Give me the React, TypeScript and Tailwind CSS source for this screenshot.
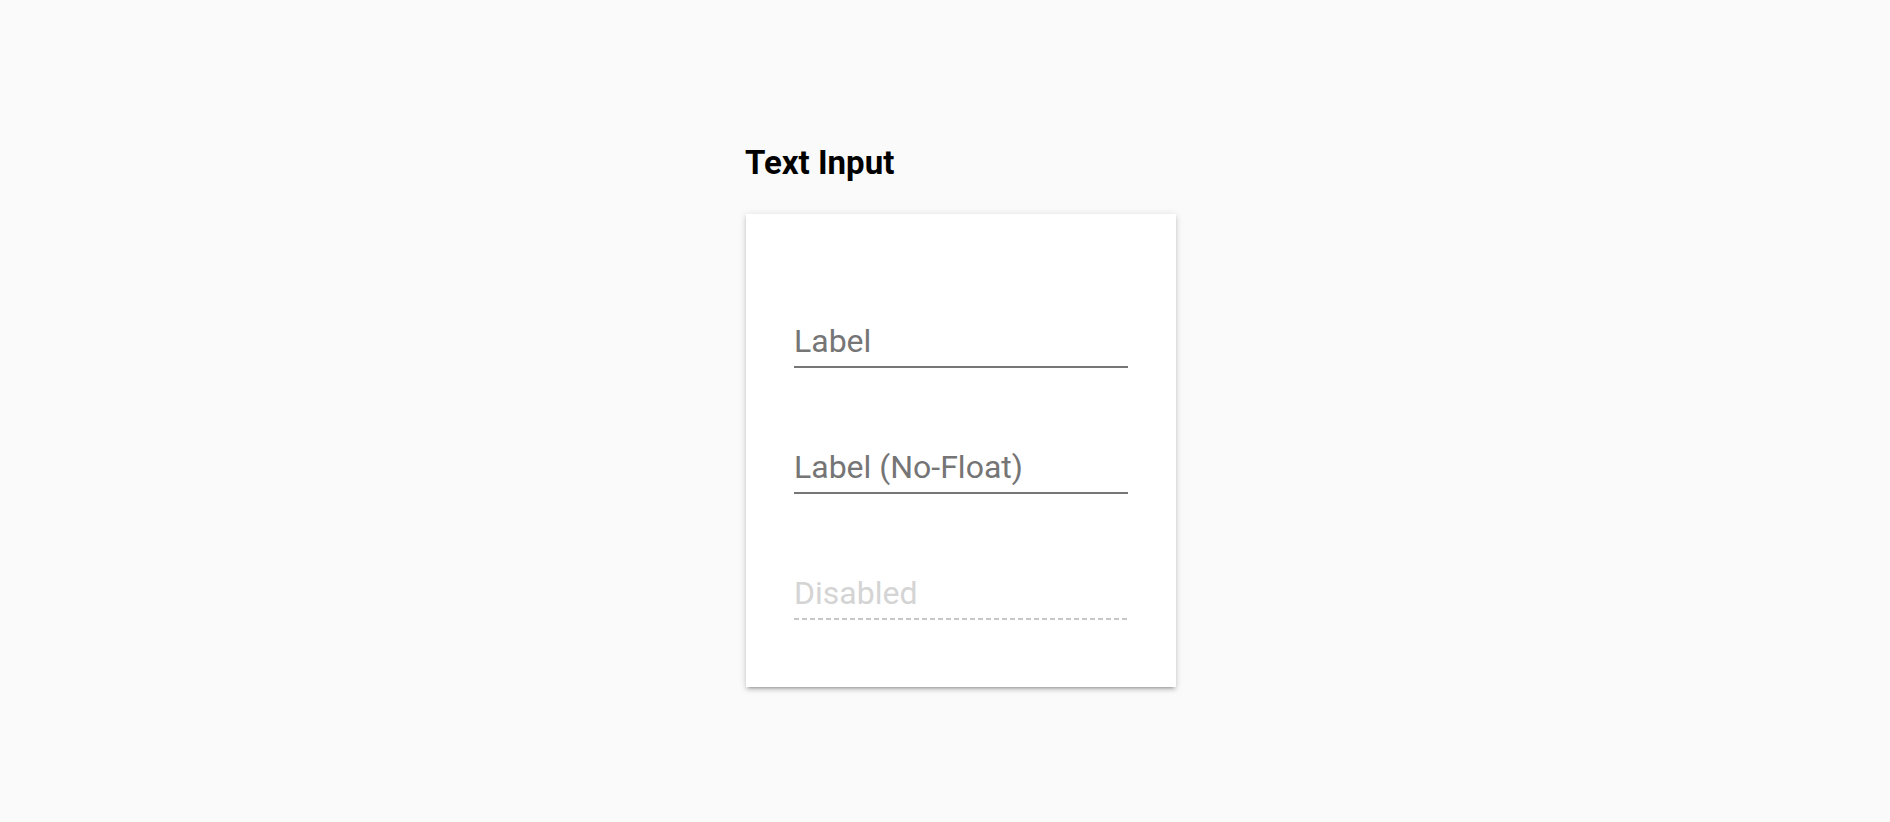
const fieldText = "block leading-[40px] pb-[5px] text-[32px]";

function Field({ label, disabled }: { label: string; disabled?: boolean }) {
  if (disabled) {
    return (
      <div className="w-full">
        <span className={`${fieldText} text-[#d4d4d4]`}>{label}</span>
        <div className="h-[2px] w-full bg-[linear-gradient(to_right,#c8c8c8_0,#c8c8c8_5px,transparent_5px)] bg-[length:8px_2px] bg-repeat-x" />
      </div>
    );
  }
  return (
    <div className="w-full border-b-2 border-[#767676]">
      <span className={`${fieldText} text-[#757575]`}>{label}</span>
    </div>
  );
}

export default function App() {
  return (
    <div className="min-h-screen bg-[#fafafa] pl-[745px] pt-[142px] font-['Roboto',sans-serif]">
      <h1 className="mb-[31px] text-[33px] font-bold leading-[41px] text-black">Text Input</h1>

      <div className="ml-px flex w-[430px] flex-col gap-[79px] bg-white px-12 pt-[107px] pb-[67px] shadow-[0_3px_4px_0_rgba(0,0,0,0.14),0_4px_2px_-3px_rgba(0,0,0,0.2),0_1px_8px_0_rgba(0,0,0,0.12)]">
        <Field label="Label" />
        <Field label="Label (No-Float)" />
        <Field label="Disabled" disabled />
      </div>
    </div>
  );
}
